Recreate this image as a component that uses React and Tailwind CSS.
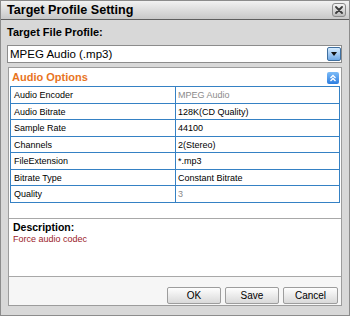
import React from "react";

const rows = [
  ["Audio Encoder", "MPEG Audio", true, "h-[17px]"],
  ["Audio Bitrate", "128K(CD Quality)", false, "h-[16px]"],
  ["Sample Rate", "44100", false, "h-[17px]"],
  ["Channels", "2(Stereo)", false, "h-[16px]"],
  ["FileExtension", "*.mp3", false, "h-[17px]"],
  ["Bitrate Type", "Constant Bitrate", false, "h-[16px]"],
  ["Quality", "3", true, "h-[17px]"],
];

function CloseBtn() {
  return (
    <div className="w-[14px] h-[14px] rounded-[3px] border border-[#8a8a8a] bg-gradient-to-b from-[#f4f4f4] to-[#bdbdbd] flex items-center justify-center">
      <svg width="8" height="8" viewBox="0 0 8 8">
        <path d="M1 1 L7 7 M7 1 L1 7" stroke="#3c3c3c" strokeWidth="1.8" strokeLinecap="round" />
      </svg>
    </div>
  );
}

function DropBtn() {
  return (
    <div className="w-[14px] h-[14px] rounded-[2px] border border-[#3f6f9f] bg-gradient-to-b from-[#d6ecff] to-[#6fa9e6] flex items-center justify-center">
      <svg width="8" height="7" viewBox="0 0 8 7">
        <path d="M1 1 H7 L4 5 Z" fill="#111" />
      </svg>
    </div>
  );
}

function CollapseBtn() {
  return (
    <div className="w-[12px] h-[12px] rounded-[2px] bg-gradient-to-b from-[#7dbcf7] to-[#2a7de0] flex items-center justify-center">
      <svg width="8" height="8" viewBox="0 0 8 8">
        <path d="M1.5 4 L4 1.5 L6.5 4 M1.5 7 L4 4.5 L6.5 7" stroke="#fff" strokeWidth="1.3" fill="none" />
      </svg>
    </div>
  );
}

function Btn({ label, w }) {
  return (
    <div className={`${w} h-[17px] rounded-[2px] border border-[#9d9d9d] bg-gradient-to-b from-[#fefefe] to-[#d9d9d9] flex items-center justify-center text-[10px] text-black leading-none`}>
      {label}
    </div>
  );
}

export default function App() {
  return (
    <div
      className="w-[350px] h-[316px] bg-[#d8d8d8] border border-[#8c8c8c] flex flex-col overflow-hidden text-black"
      style={{ fontFamily: '"Liberation Sans", Arial, sans-serif' }}
    >
      <div className="h-[19px] shrink-0 flex items-center justify-between pl-[6px] pr-[3px] bg-gradient-to-b from-[#f2f2f2] to-[#c8c8c8] border-b border-[#5e5e5e]">
        <span className="text-[12.6px] font-bold leading-none">Target Profile Setting</span>
        <CloseBtn />
      </div>

      <div className="mt-[6px] ml-[6px] h-[13px] leading-[13px] text-[11px] font-bold">Target File Profile:</div>

      <div className="mt-[6px] ml-[6px] w-[335px] h-[18px] bg-white border border-[#8c8c8c] flex items-center justify-between pl-[2px] pr-[0px]">
        <span className="text-[11.5px] leading-[16px]">MPEG Audio (.mp3)</span>
        <DropBtn />
      </div>

      <div className="mt-[4px] ml-[7px] w-[334px] h-[239px] bg-white border border-[#9c9c9c] flex flex-col">
        <div className="h-[18px] shrink-0 flex items-start justify-between pl-[3px] pr-[2px]">
          <span className="mt-[2px] text-[11px] font-bold leading-[14px] text-[#e8741e]">Audio Options</span>
          <div className="mt-[4px]">
            <CollapseBtn />
          </div>
        </div>

        <div className="mx-[1px] border-t border-x border-[#3581c4] flex flex-col">
          {rows.map(([k, v, dim, h]) => (
            <div key={k} className={`${h} flex border-b border-[#3581c4] text-[9px] leading-[16px]`}>
              <div className="w-[164px] pl-[3px] flex items-center">{k}</div>
              <div className={`flex-1 border-l border-[#3581c4] pl-[2px] flex items-center ${dim ? "text-[#8a8a8a]" : "text-black"}`}>{v}</div>
            </div>
          ))}
        </div>

        <div className="h-[15px] shrink-0" />

        <div className="h-[58px] shrink-0 border-t border-[#a8a8a8] pl-[4px] pt-[2px]">
          <div className="text-[10.5px] font-bold leading-[12px]">Description:</div>
          <div className="mt-[1px] text-[9px] leading-[11px] text-[#9b1a2a]">Force audio codec</div>
        </div>

        <div className="flex-1 border-t border-[#a8a8a8] bg-[#f6f6f6] flex justify-end items-start gap-[4px] pt-[10px] pr-[3px]">
          <Btn label="OK" w="w-[54px]" />
          <Btn label="Save" w="w-[54px]" />
          <Btn label="Cancel" w="w-[55px]" />
        </div>
      </div>
    </div>
  );
}
